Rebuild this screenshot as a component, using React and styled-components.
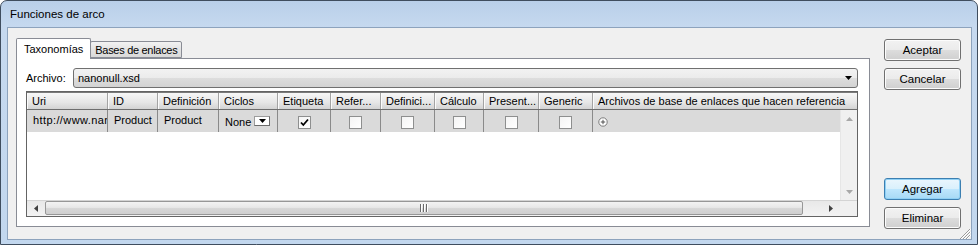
import React from 'react'
import styled, { createGlobalStyle } from 'styled-components'

const GlobalStyle = createGlobalStyle`
	html, body {
		margin: 0;
		padding: 0;
		background: #fff;
	}
	body {
		font-family: 'Liberation Sans', Arial, sans-serif;
		font-size: 11px;
		color: #000;
	}
	* {
		box-sizing: border-box;
	}
`

const columns = [
	{ key: 'uri', title: 'Uri', width: 81 },
	{ key: 'id', title: 'ID', width: 50 },
	{ key: 'def', title: 'Definición', width: 61 },
	{ key: 'ciclos', title: 'Ciclos', width: 59 },
	{ key: 'etiqueta', title: 'Etiqueta', width: 53 },
	{ key: 'refer', title: 'Refer...', width: 50 },
	{ key: 'definici', title: 'Definici...', width: 54 },
	{ key: 'calculo', title: 'Cálculo', width: 49 },
	{ key: 'present', title: 'Present...', width: 55 },
	{ key: 'generic', title: 'Generic', width: 54 },
]

const row = {
	uri: 'http://www.nanonull.com/taxonomy',
	id: 'Product',
	def: 'Product',
	ciclos: 'None',
	etiqueta: true,
	refer: false,
	definici: false,
	calculo: false,
	present: false,
	generic: false,
}

const Triangle = ({ dir = 'down', color = '#000', w = 7, h = 4 }) => {
	const pts = {
		down: `0,0 ${w},0 ${w / 2},${h}`,
		up: `0,${h} ${w},${h} ${w / 2},0`,
		left: `${w},0 ${w},${h} 0,${h / 2}`,
		right: `0,0 0,${h} ${w},${h / 2}`,
	}[dir]
	return (
		<svg width={w} height={h} viewBox={`0 0 ${w} ${h}`}>
			<polygon points={pts} fill={color} />
		</svg>
	)
}

const CheckBox = ({ checked }) => (
	<Box>
		{checked && (
			<svg width='9' height='9' viewBox='0 0 9 9'>
				<polyline points='1,4.5 3.3,7 8,1.5' fill='none' stroke='#000' strokeWidth='1.8' />
			</svg>
		)}
	</Box>
)

const PlusIcon = () => (
	<svg width='10' height='10' viewBox='0 0 10 10'>
		<circle cx='5' cy='5' r='4.2' fill='#fff' stroke='#6e6e6e' strokeWidth='0.9' />
		<path d='M2.8 5h4.4M5 2.8v4.4' stroke='#444' strokeWidth='0.9' />
	</svg>
)

const Grip = () => (
	<svg width='9' height='8' viewBox='0 0 9 8'>
		{[0, 3, 6].map(x => (
			<g key={x}>
				<rect x={x} y='0' width='1' height='8' fill='#6a6a6a' />
				<rect x={x + 1} y='0' width='1' height='8' fill='#fff' />
			</g>
		))}
	</svg>
)

const ResizeGrip = () => (
	<GripCorner>
		<svg width='11' height='11' viewBox='0 0 11 11'>
			{[1, 4, 7].map(o => (
				<g key={o}>
					<line x1={11} y1={o} x2={o} y2={11} stroke='#fff' strokeWidth='1' />
					<line x1={10} y1={o} x2={o - 1} y2={11} stroke='#9a9a9a' strokeWidth='1' />
				</g>
			))}
		</svg>
	</GripCorner>
)

const renderCell = col => {
	const v = row[col.key]
	if (typeof v === 'boolean') {
		return (
			<DataCell key={col.key} width={col.width} center>
				<CheckBox checked={v} />
			</DataCell>
		)
	}
	if (col.key === 'ciclos') {
		return (
			<DataCell key={col.key} width={col.width}>
				<CycleValue>{v}</CycleValue>
				<MiniDrop>
					<Triangle dir='down' w={7} h={4} />
				</MiniDrop>
			</DataCell>
		)
	}
	return (
		<DataCell key={col.key} width={col.width} wide={col.key === 'uri'}>
			{v}
		</DataCell>
	)
}

export default function App() {
	return (
		<>
			<GlobalStyle />
			<Frame>
				<TitleBar>Funciones de arco</TitleBar>
				<Client>
					<TabArea>
						<TabStrip>
							<Tab active>Taxonomías</Tab>
							<Tab>Bases de enlaces</Tab>
						</TabStrip>
						<Panel>
							<FileRow>
								<Label>Archivo:</Label>
								<Combo>
									<span>nanonull.xsd</span>
									<Triangle dir='down' w={7} h={4} />
								</Combo>
							</FileRow>
							<Grid>
								<HeaderRow>
									{columns.map(c => (
										<HeaderCell key={c.key} width={c.width}>
											{c.title}
										</HeaderCell>
									))}
									<HeaderCell last>Archivos de base de enlaces que hacen referencia</HeaderCell>
								</HeaderRow>
								<Body>
									<Rows>
										<DataRow>
											{columns.map(renderCell)}
											<DataCell last>
												<PlusIcon />
											</DataCell>
										</DataRow>
									</Rows>
									<VScroll>
										<ArrowBox>
											<Triangle dir='up' color='#a8a8a8' w={7} h={4} />
										</ArrowBox>
										<ArrowBox>
											<Triangle dir='down' color='#a8a8a8' w={7} h={4} />
										</ArrowBox>
									</VScroll>
								</Body>
								<HScroll>
									<HArrow>
										<Triangle dir='left' color='#404040' w={4} h={7} />
									</HArrow>
									<Thumb>
										<Grip />
									</Thumb>
									<Track />
									<HArrow>
										<Triangle dir='right' color='#404040' w={4} h={7} />
									</HArrow>
									<Corner />
								</HScroll>
							</Grid>
						</Panel>
					</TabArea>
					<ButtonColumn>
						<ButtonGroup>
							<Button>Aceptar</Button>
							<Button>Cancelar</Button>
						</ButtonGroup>
						<ButtonGroup>
							<Button focused>Agregar</Button>
							<Button>Eliminar</Button>
						</ButtonGroup>
					</ButtonColumn>
					<ResizeGrip />
				</Client>
			</Frame>
		</>
	)
}

const Frame = styled.div`
	width: 978px;
	height: 245px;
	display: flex;
	flex-direction: column;
	border: 1px solid #3f4d5e;
	border-radius: 7px 7px 0 0;
	background: linear-gradient(180deg, #b9cfe9 0px, #c6d9ef 26px, #c2d7ee 100%);
	padding: 0 5px 4px 6px;
`

const TitleBar = styled.div`
	height: 26px;
	line-height: 27px;
	padding-left: 3px;
	font-size: 11.5px;
	color: #000;
`

const Client = styled.div`
	position: relative;
	flex: 1;
	display: flex;
	gap: 14px;
	border: 1px solid #8da3bd;
	background: #f0f0f0;
	padding: 10px 10px 10px 8px;
`

const TabArea = styled.div`
	flex: 1;
	display: flex;
	flex-direction: column;
	padding-bottom: 2px;
`

const TabStrip = styled.div`
	height: 20px;
	display: flex;
	align-items: flex-end;
	position: relative;
	z-index: 1;
`

const Tab = styled.div`
	height: ${p => (p.active ? '21px' : '17px')};
	margin-bottom: ${p => (p.active ? '-1px' : '0')};
	margin-left: ${p => (p.active ? '0' : '-1px')};
	padding: 0 ${p => (p.active ? '7px' : '4px')};
	line-height: ${p => (p.active ? '20px' : '16px')};
	letter-spacing: ${p => (p.active ? '0' : '-0.3px')};
	border: 1px solid #898c95;
	border-bottom: ${p => (p.active ? 'none' : '1px solid #898c95')};
	border-radius: 2px 2px 0 0;
	background: ${p => (p.active ? '#fff' : 'linear-gradient(180deg, #f2f2f2, #e3e3e3 50%, #d9d9d9)')};
`

const Panel = styled.div`
	flex: 1;
	display: flex;
	flex-direction: column;
	gap: 3px;
	border: 1px solid #898c95;
	background: #fff;
	padding: 9px 11px 9px 9px;
`

const FileRow = styled.div`
	display: flex;
	align-items: center;
	gap: 7px;
	height: 20px;
`

const Label = styled.span`
	width: 40px;
`

const Combo = styled.div`
	flex: 1;
	height: 20px;
	display: flex;
	align-items: center;
	justify-content: space-between;
	padding: 0 5px 0 4px;
	border: 1px solid #707070;
	border-radius: 3px;
	background: linear-gradient(180deg, #f2f2f2, #ebebeb 50%, #dddddd 51%, #d3d3d3);
`

const Grid = styled.div`
	height: 126px;
	display: flex;
	flex-direction: column;
	border: 1px solid #646464;
	background: #fff;
`

const HeaderRow = styled.div`
	height: 18px;
	display: flex;
	border-top: 1px solid #7a7a7a;
	border-bottom: 1px solid #6e6e6e;
	background: linear-gradient(180deg, #f7f7f7, #e6e6e6 60%, #d3d3d3);
`

const HeaderCell = styled.div`
	${p => (p.last ? 'flex: 1;' : `width: ${p.width}px;`)}
	flex-shrink: 0;
	line-height: 16px;
	padding-left: 5px;
	white-space: nowrap;
	overflow: hidden;
	border-right: ${p => (p.last ? 'none' : '1px solid #a3a3a3')};
	box-shadow: inset 1px 0 #fbfbfb;
`

const Body = styled.div`
	flex: 1;
	display: flex;
`

const Rows = styled.div`
	flex: 1;
	background: #fff;
`

const DataRow = styled.div`
	height: 22px;
	display: flex;
	background: #dadada;
`

const DataCell = styled.div`
	${p => (p.last ? 'flex: 1;' : `width: ${p.width}px;`)}
	flex-shrink: 0;
	display: flex;
	align-items: center;
	justify-content: ${p => (p.center ? 'center' : 'flex-start')};
	padding: ${p => (p.center ? '0' : p.last ? '1px 0 0 5px' : '0 0 2px 6px')};
	letter-spacing: ${p => (p.wide ? '0.4px' : '0')};
	white-space: nowrap;
	overflow: hidden;
	border-right: ${p => (p.last ? 'none' : '1px solid #8a8a8a')};
`

const CycleValue = styled.span`
	padding-top: 3px;
	width: 29px;
	flex-shrink: 0;
`

const MiniDrop = styled.div`
	width: 16px;
	height: 10px;
	margin-top: 2px;
	display: flex;
	align-items: center;
	justify-content: center;
	background: #fff;
	border: 1px solid #9c9c9c;
	border-right-color: #6c6c6c;
	border-bottom-color: #6c6c6c;
`

const Box = styled.div`
	width: 13px;
	height: 13px;
	display: flex;
	align-items: center;
	justify-content: center;
	margin-top: 2px;
	border: 1px solid #8e8f8f;
	background: linear-gradient(135deg, #f4f4f4, #ffffff);
`

const VScroll = styled.div`
	width: 17px;
	display: flex;
	flex-direction: column;
	justify-content: space-between;
	background: #f0f0f0;
	border-left: 1px solid #e6e6e6;
`

const ArrowBox = styled.div`
	height: 17px;
	display: flex;
	align-items: center;
	justify-content: center;
`

const HScroll = styled.div`
	height: 16px;
	display: flex;
	background: linear-gradient(180deg, #e8e8e8, #f3f3f3);
	border-top: 1px solid #d4d4d4;
`

const HArrow = styled.div`
	width: 18px;
	flex-shrink: 0;
	display: flex;
	align-items: center;
	justify-content: center;
`

const Thumb = styled.div`
	width: 758px;
	flex-shrink: 0;
	margin: 0 0 1px;
	display: flex;
	align-items: center;
	justify-content: center;
	border: 1px solid #979797;
	border-radius: 2px;
	background: linear-gradient(180deg, #f3f3f3, #e8e8e8 45%, #d6d6d6 55%, #cfcfcf);
`

const Track = styled.div`
	flex: 1;
`

const Corner = styled.div`
	width: 17px;
	flex-shrink: 0;
	background: #f0f0f0;
`

const ButtonColumn = styled.div`
	width: 77px;
	display: flex;
	flex-direction: column;
	justify-content: space-between;
	padding-top: 1px;
`

const ButtonGroup = styled.div`
	display: flex;
	flex-direction: column;
	gap: 7px;
`

const Button = styled.button`
	height: 22px;
	padding: 0;
	font-family: inherit;
	font-size: 11.5px;
	color: #000;
	border: 1px solid ${p => (p.focused ? '#3c7fb1' : '#707070')};
	border-radius: 3px;
	background: ${p =>
		p.focused
			? 'linear-gradient(180deg, #eaf6fd, #d9f0fc 50%, #bee6fd 51%, #a7d9f5)'
			: 'linear-gradient(180deg, #f2f2f2, #ebebeb 50%, #dddddd 51%, #cfcfcf)'};
	box-shadow: inset 0 0 0 1px ${p => (p.focused ? '#8fd0f5' : '#fcfcfc')};
`

const GripCorner = styled.div`
	position: absolute;
	right: 0;
	bottom: 0;
	width: 11px;
	height: 11px;
	display: flex;
`
